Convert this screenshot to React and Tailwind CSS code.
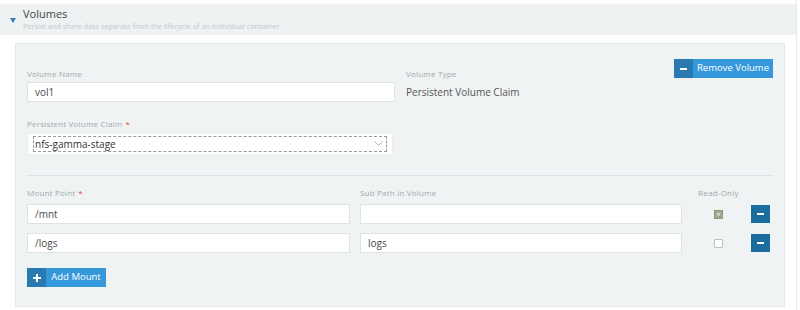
import React from 'react';

function Label({ children, required }) {
  return (
    <div className="text-[8px] leading-[10px] text-[#a3a8ab] tracking-[0.2px] whitespace-nowrap">
      {children}
      {required && <span className="text-[#e04848] ml-[3px]">*</span>}
    </div>
  );
}

function TextInput({ value, className = '' }) {
  return (
    <div className={`h-[20px] bg-white border border-[#dfe3e5] flex items-center px-[7px] text-[10px] text-[#4a4a4a] ${className}`}>
      {value}
    </div>
  );
}

function SplitButton({ icon, label, className = '' }) {
  return (
    <div className={`flex h-[19px] ${className}`}>
      <div className="w-[19px] shrink-0 bg-[#2a79b0] flex items-center justify-center text-white">
        {icon === 'minus' ? (
          <div className="w-[7px] h-[2px] bg-white" />
        ) : (
          <svg width="8" height="8" viewBox="0 0 8 8">
            <rect x="3" y="0" width="2" height="8" fill="#fff" />
            <rect x="0" y="3" width="8" height="2" fill="#fff" />
          </svg>
        )}
      </div>
      <div className="flex-1 bg-[#3598db] text-white text-[9.5px] flex items-center justify-center whitespace-nowrap">
        {label}
      </div>
    </div>
  );
}

function MinusButton() {
  return (
    <div className="w-[19px] h-[18px] bg-[#1b6d9f] flex items-center justify-center">
      <div className="w-[7px] h-[2px] bg-white" />
    </div>
  );
}

function MountRow({ mount, sub, readOnly }) {
  return (
    <div className="flex items-center">
      <TextInput value={mount} className="w-[323px]" />
      <TextInput value={sub} className="w-[322px] ml-[10px]" />
      <div className="w-[69px] flex justify-center pl-[4px]">
        {readOnly ? (
          <div className="w-[9px] h-[9px] bg-[#9dab8c] border border-[#8a9a7a] flex items-center justify-center text-[7px] leading-none text-white">×</div>
        ) : (
          <div className="w-[9px] h-[9px] bg-white border border-[#b9bec2] rounded-[1px]" />
        )}
      </div>
      <MinusButton />
    </div>
  );
}

export default function App() {
  return (
    <div className="w-[800px] h-[310px] bg-white overflow-hidden" style={{ fontFamily: '"Open Sans", "Liberation Sans", sans-serif' }}>
      <div className="w-[797px] h-full border-r border-[#e8ebed] pt-[4px]">
        <div className="h-[31px] bg-[#eef2f3] flex items-center pl-[10px]">
          <div className="w-0 h-0 border-l-[3.5px] border-r-[3.5px] border-t-[5px] border-l-transparent border-r-transparent border-t-[#2f7fb5] mt-[2px]" />
          <div className="ml-[7px] -mt-[1px]">
            <div className="text-[11px] leading-[13px] text-[#444]">Volumes</div>
            <div className="text-[7.3px] leading-[10px] text-[#c3c8cb] mt-[1px]">Persist and share data separate from the lifecycle of an individual container.</div>
          </div>
        </div>

        <div className="px-[15px] pt-[8px]">
          <div className="w-[770px] h-[264px] bg-[#f0f3f4] border border-[#e3e7e9] px-[11px] pt-[15px]">
            <div className="flex">
              <div className="w-[368px] pt-[10px]">
                <Label>Volume Name</Label>
                <TextInput value="vol1" className="mt-[3px]" />
                <div className="mt-[17px]">
                  <Label required>Persistent Volume Claim</Label>
                </div>
                <div className="mt-[4px] w-[366px] h-[22px] bg-white border border-[#eceff0] flex items-center px-[5px]">
                  <div className="flex-1 h-[16px] border border-dashed border-[#9a9a9a] flex items-center justify-between pl-[1px] pr-[3px] text-[10px] text-[#333]">
                    <span>nfs-gamma-stage</span>
                    <svg width="9" height="6" viewBox="0 0 9 6">
                      <path d="M0.5 0.5 L4.5 4.5 L8.5 0.5" fill="none" stroke="#999" strokeWidth="0.8" />
                    </svg>
                  </div>
                </div>
              </div>
              <div className="flex-1 pl-[11px] pt-[10px]">
                <Label>Volume Type</Label>
                <div className="text-[10px] text-[#555] mt-[6px]">Persistent Volume Claim</div>
              </div>
              <SplitButton icon="minus" label="Remove Volume" className="w-[99px]" />
            </div>

            <div className="border-t border-[#dde1e3] mt-[20px]" />

            <div className="flex mt-[12px]">
              <div className="w-[333px]"><Label required>Mount Point</Label></div>
              <div className="w-[322px]"><Label>Sub Path in Volume</Label></div>
              <div className="w-[69px] flex justify-center pl-[4px]"><Label>Read-Only</Label></div>
            </div>
            <div className="mt-[6px] flex flex-col gap-[9px]">
              <MountRow mount="/mnt" sub="" readOnly />
              <MountRow mount="/logs" sub="logs" />
            </div>

            <SplitButton icon="plus" label="Add Mount" className="w-[79px] mt-[15px]" />
          </div>
        </div>
      </div>
    </div>
  );
}
